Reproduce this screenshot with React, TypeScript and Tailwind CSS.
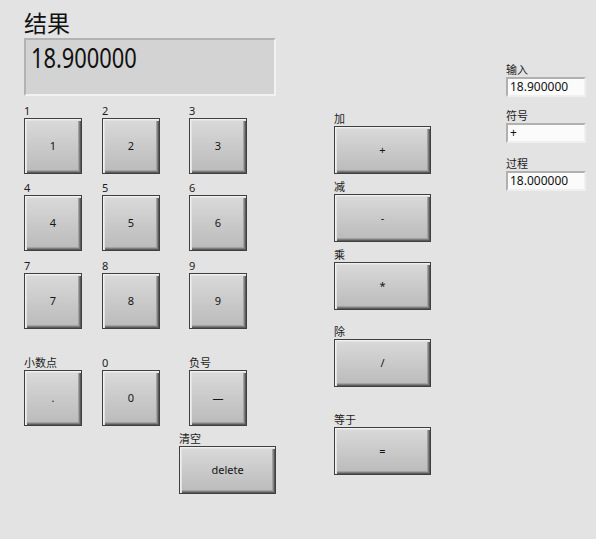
import React from "react";

const font = { fontFamily: '"Noto Sans", "Noto Sans CJK SC", sans-serif' };

const btn =
  "flex items-center justify-center border border-[#3f3f3f] bg-gradient-to-b from-[#dadada] to-[#bababa] text-[11px] text-[#151515] shadow-[inset_1px_1px_0_#f0f0f0,inset_2px_2px_0_#e2e2e2,inset_-1px_-1px_0_#5a5a5a,inset_-2px_-2px_0_#7e7e7e,inset_-3px_-3px_0_#a2a2a2]";

const Label = ({ text }: { text: string }) => (
  <div className="h-[15px] text-[11px] leading-[15px] text-[#1c1c1c]">{text}</div>
);

const Key = ({ label, value, className = "" }: { label: string; value: string; className?: string }) => (
  <div className={className}>
    <Label text={label} />
    <div className={`${btn} h-[56px] w-[58px]`}>{value}</div>
  </div>
);

const OpKey = ({ label, value, className = "" }: { label: string; value: string; className?: string }) => (
  <div className={className}>
    <Label text={label} />
    <div className={`${btn} h-[48px] w-[97px]`}>{value}</div>
  </div>
);

const KeyRow = ({ keys, className = "" }: { keys: [string, string][]; className?: string }) => (
  <div className={`flex ${className}`}>
    <Key label={keys[0][0]} value={keys[0][1]} />
    <Key label={keys[1][0]} value={keys[1][1]} className="ml-[20px]" />
    <Key label={keys[2][0]} value={keys[2][1]} className="ml-[29px]" />
  </div>
);

const Readout = ({ label, value, className = "" }: { label: string; value: string; className?: string }) => (
  <div className={className}>
    <Label text={label} />
    <div className="h-[20px] w-[80px] border-2 border-t-[#b0b0b0] border-l-[#b0b0b0] border-b-[#efefef] border-r-[#efefef] bg-[#fbfbfb] pl-[2px] text-[12px] leading-[16px] text-[#111]">
      {value}
    </div>
  </div>
);

export default function App() {
  return (
    <div className="flex h-[539px] w-[596px] overflow-hidden bg-[#e3e3e3] pl-[24px]" style={font}>
      <div className="w-[252px]">
        <div className="mt-[9px] h-[29px] text-[23px] leading-[29px] text-[#111]">结果</div>
        <div className="h-[58px] w-[252px] border-2 border-t-[#b3b3b3] border-l-[#b3b3b3] border-b-[#f2f2f2] border-r-[#f2f2f2] bg-[#d3d3d3] pl-[5px] pt-[3px]">
          <span className="inline-block origin-left scale-x-[0.78] text-[28px] leading-none text-[#111]">18.900000</span>
        </div>
        <KeyRow className="mt-[7px]" keys={[["1", "1"], ["2", "2"], ["3", "3"]]} />
        <KeyRow className="mt-[6px]" keys={[["4", "4"], ["5", "5"], ["6", "6"]]} />
        <KeyRow className="mt-[7px]" keys={[["7", "7"], ["8", "8"], ["9", "9"]]} />
        <KeyRow className="mt-[26px]" keys={[["小数点", "."], ["0", "0"], ["负号", "—"]]} />
        <div className="mt-[5px] flex pl-[155px]">
          <OpKey label="清空" value="delete" />
        </div>
      </div>

      <div className="ml-[58px] pt-[111px]">
        <OpKey label="加" value="+" />
        <OpKey label="减" value="-" className="mt-[5px]" />
        <OpKey label="乘" value="*" className="mt-[5px]" />
        <OpKey label="除" value="/" className="mt-[14px]" />
        <OpKey label="等于" value="=" className="mt-[25px]" />
      </div>

      <div className="ml-[75px] pt-[62px]">
        <Readout label="输入" value="18.900000" />
        <Readout label="符号" value="+" className="mt-[11px]" />
        <Readout label="过程" value="18.000000" className="mt-[13px]" />
      </div>
    </div>
  );
}
